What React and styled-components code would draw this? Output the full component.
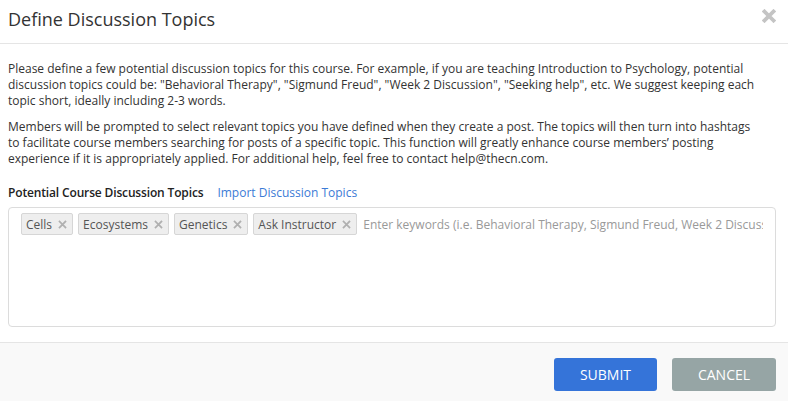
import React from 'react';
import styled, { createGlobalStyle } from 'styled-components';

const GlobalStyle = createGlobalStyle`
  html, body {
    margin: 0;
    padding: 0;
    background: #ffffff;
  }
  body {
    font-family: "Open Sans", "Segoe UI", Arial, sans-serif;
    color: #333;
  }
`;

const Modal = styled.div`
  width: 788px;
  height: 401px;
  display: flex;
  flex-direction: column;
  background: #fff;
`;

const Header = styled.div`
  flex-shrink: 0;
  height: 43px;
  display: flex;
  align-items: center;
  justify-content: space-between;
  padding: 0 12px 0 8px;
  border-bottom: 1px solid #e5e5e5;
`;

const Title = styled.h4`
  margin: -5px 0 0;
  font-size: 18px;
  font-weight: 400;
  color: #333;
  line-height: 22px;
`;

const CloseButton = styled.button`
  border: 0;
  background: none;
  padding: 0;
  width: 14px;
  height: 14px;
  margin-top: -11px;
  cursor: pointer;
  display: flex;
`;

const Body = styled.div`
  flex: 1;
  padding: 17px 12px 15px 8px;
`;

const Paragraph = styled.p`
  margin: 0 0 10px;
  font-size: 12px;
  line-height: 16px;
  color: #333;
  white-space: nowrap;
`;

const LabelRow = styled.div`
  display: flex;
  align-items: center;
  gap: 14px;
  margin-top: 18px;
  font-size: 12px;
  line-height: 16px;
`;

const Label = styled.span`
  font-weight: 600;
  color: #222;
  letter-spacing: -0.15px;
`;

const Link = styled.a`
  color: #3b7bd6;
  text-decoration: none;
  cursor: pointer;
`;

const TagBox = styled.div`
  margin-top: 6px;
  height: 120px;
  box-sizing: border-box;
  border: 1px solid #dcdcdc;
  border-radius: 4px;
  padding: 5px 12px;
  display: flex;
  align-items: flex-start;
  gap: 5px;
`;

const Tag = styled.span`
  display: inline-flex;
  align-items: center;
  gap: 6px;
  height: 22px;
  box-sizing: border-box;
  padding: 0 5px 0 4px;
  background: #eeeeee;
  border: 1px solid #d6d6d6;
  border-radius: 2px;
  font-size: 12px;
  color: #555;
  white-space: nowrap;
`;

const TagInput = styled.input`
  flex: 1;
  min-width: 0;
  height: 22px;
  border: 0;
  outline: none;
  padding: 0 0 0 1px;
  font-family: inherit;
  font-size: 12px;
  color: #555;
  background: transparent;
  &::placeholder {
    color: #999;
  }
`;

const Footer = styled.div`
  flex-shrink: 0;
  box-sizing: border-box;
  height: 59px;
  border-top: 1px solid #e5e5e5;
  background: #f9f9f9;
  display: flex;
  justify-content: flex-end;
  align-items: flex-start;
  gap: 15px;
  padding: 15px 12px 0;
`;

const Button = styled.button`
  width: ${(p) => p.$width}px;
  height: 33px;
  border: 0;
  border-radius: 3px;
  background: ${(p) => p.$bg};
  color: #fff;
  font-family: inherit;
  font-size: 14px;
  text-transform: uppercase;
  cursor: pointer;
`;

const XIcon = ({ size, color, weight }) => (
  <svg width={size} height={size} viewBox="0 0 14 14">
    <path
      d="M2.5 2.5 L11.5 11.5 M11.5 2.5 L2.5 11.5"
      stroke={color}
      strokeWidth={weight}
      strokeLinecap="square"
      fill="none"
    />
  </svg>
);

const topics = ['Cells', 'Ecosystems', 'Genetics', 'Ask Instructor'];

const App = () => {
  return (
    <Modal>
      <GlobalStyle />
      <Header>
        <Title>Define Discussion Topics</Title>
        <CloseButton aria-label="Close">
          <XIcon size={14} color="#c4c4c4" weight={3.8} />
        </CloseButton>
      </Header>
      <Body>
        <Paragraph>
          Please define a few potential discussion topics for this course. For example, if you are
          teaching Introduction to Psychology, potential
          <br />
          discussion topics could be: "Behavioral Therapy", "Sigmund Freud", "Week 2 Discussion",
          "Seeking help", etc. We suggest keeping each
          <br />
          topic short, ideally including 2-3 words.
        </Paragraph>
        <Paragraph>
          Members will be prompted to select relevant topics you have defined when they create a
          post. The topics will then turn into hashtags
          <br />
          to facilitate course members searching for posts of a specific topic. This function will
          greatly enhance course members’ posting
          <br />
          experience if it is appropriately applied. For additional help, feel free to contact
          help@thecn.com.
        </Paragraph>
        <LabelRow>
          <Label>Potential Course Discussion Topics</Label>
          <Link>Import Discussion Topics</Link>
        </LabelRow>
        <TagBox>
          {topics.map((t) => (
            <Tag key={t}>
              {t}
              <XIcon size={9} color="#b0b0b0" weight={2.8} />
            </Tag>
          ))}
          <TagInput placeholder="Enter keywords (i.e. Behavioral Therapy, Sigmund Freud, Week 2 Discussion, Seeking help)" />
        </TagBox>
      </Body>
      <Footer>
        <Button $bg="#3574d9" $width={103}>Submit</Button>
        <Button $bg="#96a5a5" $width={104}>Cancel</Button>
      </Footer>
    </Modal>
  );
};

export default App;
